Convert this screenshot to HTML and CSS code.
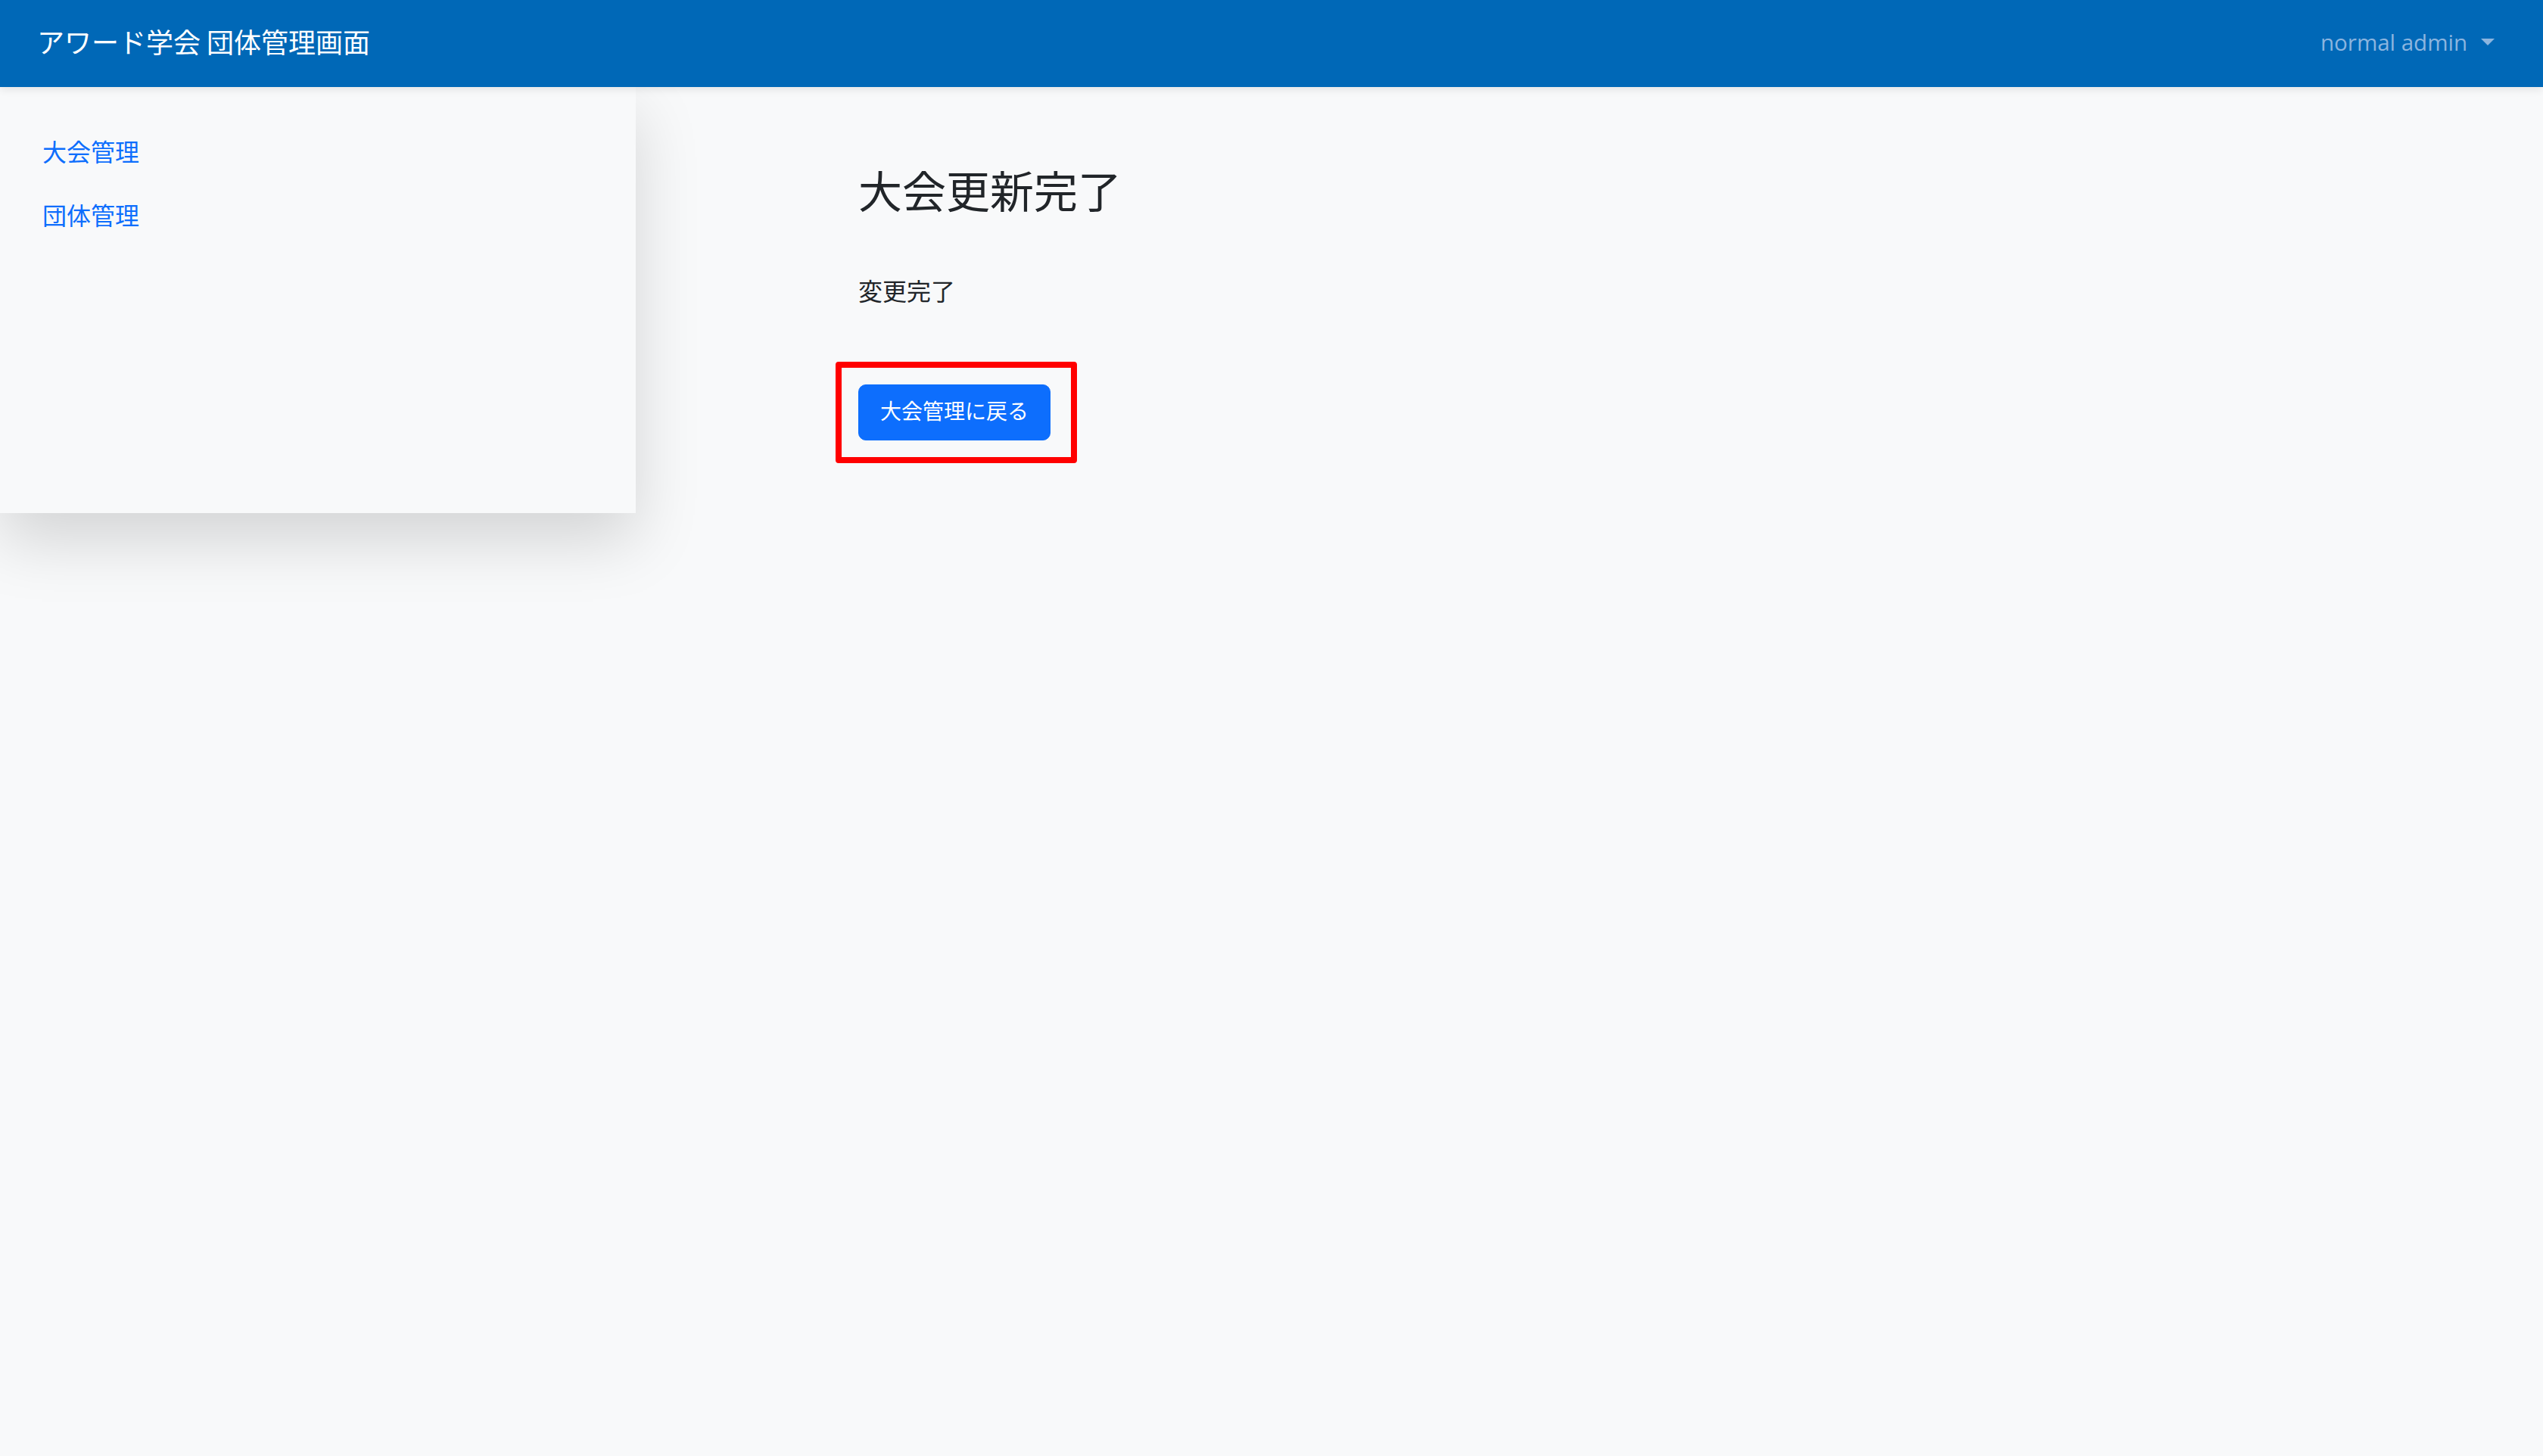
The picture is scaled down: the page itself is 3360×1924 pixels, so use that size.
FILE: index.html
```html
<!DOCTYPE html>
<html lang="ja">
<head>
  <meta charset="UTF-8">
  <title>アワード学会 団体管理画面</title>
  <link rel="stylesheet" href="styles.css">
</head>
<body>

  <nav class="navbar">
    <a class="brand" href="#">アワード学会 団体管理画面</a>
    <a class="user-menu" href="#">normal admin<span class="caret"></span></a>
  </nav>

  <div class="wrapper">
    <aside class="sidebar">
      <a class="side-link" href="#">大会管理</a>
      <a class="side-link" href="#">団体管理</a>
    </aside>

    <main class="content">
      <h3 class="page-title">大会更新完了</h3>
      <p class="message">変更完了</p>
      <div class="highlight">
        <a class="btn-primary" href="#">大会管理に戻る</a>
      </div>
    </main>
  </div>

</body>
</html>
```

FILE: styles.css
```css
/* 全体 */
body {
  margin: 0;
  font-family: "Noto Sans CJK JP", "Noto Sans", sans-serif;
  color: #212529;
  background-color: #f8f9fa;
  min-height: 1924px;
}

a { text-decoration: none; }

/* ヘッダー */
.navbar {
  position: relative;
  z-index: 2;
  height: 115px;
  display: flex;
  align-items: center;
  justify-content: space-between;
  padding: 0 64px 0 49px;
  background-color: #0068b7;
  box-shadow: 0 4px 10px rgba(0, 0, 0, .08);
}
.brand { color: #fff; font-size: 36px; line-height: 1.5; margin-bottom: 8px; }
.user-menu {
  display: flex;
  align-items: center;
  margin-bottom: 4px;
  font-family: "Open Sans", sans-serif;
  font-size: 29.5px;
  color: #8cb5df;
}
.caret {
  margin-left: 18px;
  border-top: 9px solid #8cb5df;
  border-left: 9px solid transparent;
  border-right: 9px solid transparent;
}

/* レイアウト */
.wrapper { display: flex; align-items: flex-start; }

.sidebar {
  position: relative;
  z-index: 1;
  width: 840px;
  height: 563px;
  box-sizing: border-box;
  padding: 42px 24px 0;
  display: flex;
  flex-direction: column;
  background-color: #f8f9fa;
  box-shadow: 0 36px 80px rgba(0, 0, 0, .15);
}
.side-link {
  padding: 18px 32px;
  font-size: 32px;
  line-height: 48px;
  color: #0d6efd;
}

.content { padding: 101px 0 0 294px; }
.page-title {
  margin: 0 0 73px;
  font-size: 58px;
  font-weight: 400;
  line-height: 1.2;
}
.message { margin: 0 0 71px; font-size: 32px; line-height: 48px; }

/* 注目枠 */
.highlight {
  display: inline-block;
  margin-left: -30px;
  padding: 22px 27px 22px 22px;
  border: 8px solid #ff0000;
  border-radius: 4px;
}
.btn-primary {
  display: inline-block;
  padding: 12px 28px 18px;
  border: 1px solid #0d6efd;
  border-radius: 10px;
  background-color: #0d6efd;
  color: #fff;
  font-size: 28px;
  line-height: 42px;
}
```
